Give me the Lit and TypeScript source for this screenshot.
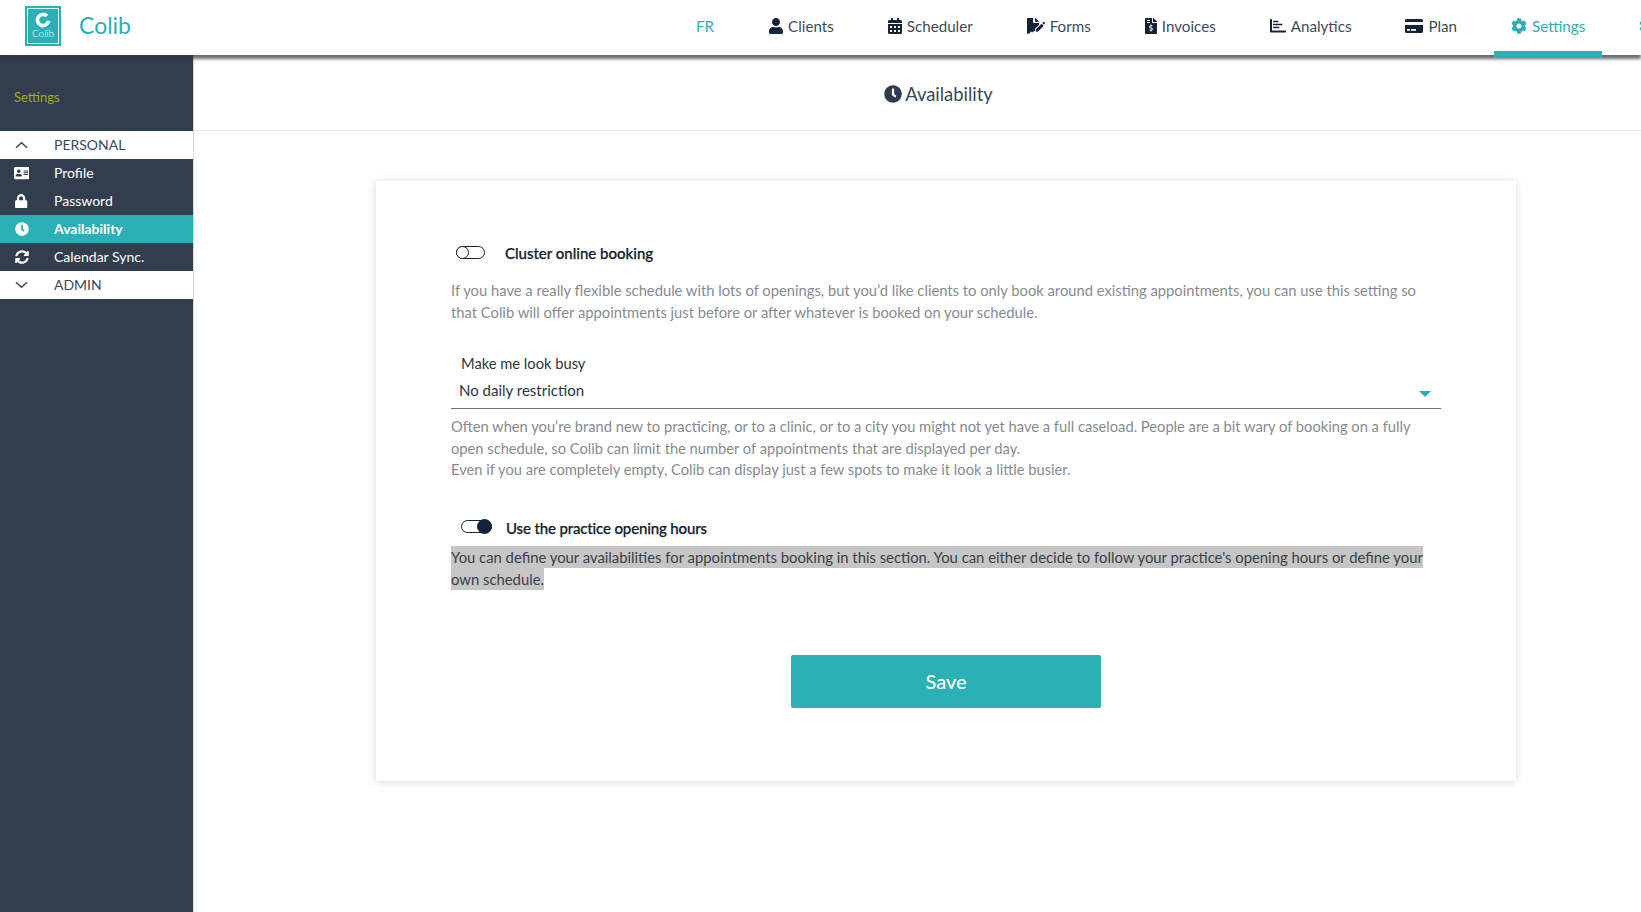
import { LitElement, html, css, svg } from 'lit';
import { customElement } from 'lit/decorators.js';

const icons: Record<string, { box: string; d: string }> = {
  user: { box: '0 0 448 512', d: 'M224 256c70.7 0 128-57.3 128-128S294.7 0 224 0 96 57.3 96 128s57.3 128 128 128zm89.6 32h-16.7c-22.2 10.2-46.9 16-72.9 16s-50.6-5.8-72.9-16h-16.7C60.2 288 0 348.2 0 422.4V464c0 26.5 21.5 48 48 48h352c26.5 0 48-21.5 48-48v-41.6c0-74.2-60.2-134.4-134.4-134.4z' },
  calendar: { box: '0 0 448 512', d: 'M0 464c0 26.5 21.5 48 48 48h352c26.5 0 48-21.5 48-48V192H0v272zm320-196c0-6.6 5.4-12 12-12h40c6.6 0 12 5.4 12 12v40c0 6.6-5.4 12-12 12h-40c-6.6 0-12-5.4-12-12v-40zm0 128c0-6.6 5.4-12 12-12h40c6.6 0 12 5.4 12 12v40c0 6.6-5.4 12-12 12h-40c-6.6 0-12-5.4-12-12v-40zM192 268c0-6.6 5.4-12 12-12h40c6.6 0 12 5.4 12 12v40c0 6.6-5.4 12-12 12h-40c-6.6 0-12-5.4-12-12v-40zm0 128c0-6.6 5.4-12 12-12h40c6.6 0 12 5.4 12 12v40c0 6.6-5.4 12-12 12h-40c-6.6 0-12-5.4-12-12v-40zM64 268c0-6.6 5.4-12 12-12h40c6.6 0 12 5.4 12 12v40c0 6.6-5.4 12-12 12H76c-6.6 0-12-5.4-12-12v-40zm0 128c0-6.6 5.4-12 12-12h40c6.6 0 12 5.4 12 12v40c0 6.6-5.4 12-12 12H76c-6.6 0-12-5.4-12-12v-40zM400 64h-48V16c0-8.8-7.2-16-16-16h-32c-8.8 0-16 7.2-16 16v48H160V16c0-8.8-7.2-16-16-16h-32c-8.8 0-16 7.2-16 16v48H48C21.5 64 0 85.5 0 112v48h448v-48c0-26.5-21.5-48-48-48z' },
  forms: { box: '0 0 576 512', d: 'M218.2 426.1c-7.6-.5-14.6 3.5-18 10.2-11.5 23-44.5 29.1-64.8 7l-16.4-18-21 53.4c-3.4 8.6-11.3 14.4-20.4 15.1h-1.6c-8.5 0-16.3-4.7-20.3-12.3L48 461.500V464c0 26.5 0 48 0 48h-24C10.700 512 0 501.300 0 488V24C0 10.700 10.700 0 24 0h168v136c0 13.200 10.800 24 24 24h168v60L256 347v64c0 5-15 15-37.800 15.100zM384 122H256V0h6c6.400 0 12.500 2.500 17 7l98 98c4.500 4.500 7 10.600 7 17zM288 360l178-178 68 68-178 178-76 10zM488 160l31-31c9-9 24-9 33 0l17 17c9 9 9 24 0 33l-31 31z' },
  invoice: { box: '0 0 384 512', d: 'M377 105L279.100 7c-4.500-4.500-10.600-7-17-7H256v128h128v-6.100c0-6.300-2.500-12.400-7-16.900zM224 136V0H24C10.700 0 0 10.700 0 24v464c0 13.300 10.700 24 24 24h336c13.300 0 24-10.700 24-24V160H248c-13.200 0-24-10.800-24-24zM64 72c0-4.400 3.600-8 8-8h80c4.400 0 8 3.600 8 8v16c0 4.400-3.600 8-8 8H72c-4.400 0-8-3.600-8-8V72zm0 64c0-4.400 3.600-8 8-8h80c4.400 0 8 3.600 8 8v16c0 4.400-3.600 8-8 8H72c-4.400 0-8-3.600-8-8v-16zm144 263.900V424c0 4.400-3.600 8-8 8h-16c-4.400 0-8-3.600-8-8v-24.300c-11.300-.6-22.300-4.500-31.400-11.400-3.900-2.900-4.100-8.800-.6-12.100l11.800-11.200c2.800-2.600 6.900-2.800 10.100-.7 3.900 2.400 8.300 3.700 12.800 3.700h28.100c6.500 0 11.800-5.900 11.800-13.200 0-6-3.600-11.200-8.800-12.800l-45-13.500c-18.600-5.600-31.600-23.400-31.600-43.400 0-24.500 19.100-44.400 42.700-45.100V216c0-4.400 3.600-8 8-8h16c4.400 0 8 3.600 8 8v24.300c11.300.6 22.300 4.500 31.400 11.400 3.900 2.900 4.100 8.800.6 12.100l-11.800 11.200c-2.800 2.600-6.900 2.800-10.100.7-3.900-2.400-8.300-3.700-12.800-3.700h-28.100c-6.500 0-11.800 5.900-11.800 13.200 0 6 3.600 11.200 8.800 12.800l45 13.500c18.600 5.600 31.600 23.400 31.600 43.400 0 24.500-19 44.400-42.700 45z' },
  chart: { box: '0 0 512 512', d: 'M496 400H64V48c0-8.800-7.200-16-16-16H16C7.200 32 0 39.200 0 48v384c0 17.700 14.300 32 32 32h464c8.800 0 16-7.200 16-16v-32c0-8.800-7.200-16-16-16zM112 136h144c6.600 0 12-5.400 12-12v-24c0-6.600-5.400-12-12-12H112c-6.600 0-12 5.400-12 12v24c0 6.600 5.400 12 12 12zm0 96h272c6.600 0 12-5.400 12-12v-24c0-6.600-5.400-12-12-12H112c-6.600 0-12 5.400-12 12v24c0 6.600 5.400 12 12 12zm0 96h176c6.600 0 12-5.400 12-12v-24c0-6.600-5.400-12-12-12H112c-6.600 0-12 5.400-12 12v24c0 6.600 5.400 12 12 12z' },
  card: { box: '0 0 576 512', d: 'M0 432c0 26.500 21.500 48 48 48h480c26.500 0 48-21.500 48-48V224H0v208zm192-68c0-6.600 5.400-12 12-12h136c6.600 0 12 5.400 12 12v40H192v-40zm-128 0c0-6.600 5.400-12 12-12h72c6.600 0 12 5.400 12 12v40H64v-40zM576 80v48H0V80c0-26.500 21.500-48 48-48h480c26.500 0 48 21.500 48 48z' },
  cog: { box: '0 0 512 512', d: 'M487.4 315.7l-42.6-24.6c4.3-23.2 4.3-47 0-70.2l42.6-24.6c4.9-2.8 7.1-8.6 5.5-14-11.1-35.6-30-67.8-54.7-94.6-3.8-4.1-10-5.1-14.8-2.3L380.8 110c-17.9-15.4-38.5-27.3-60.8-35.1V25.8c0-5.6-3.9-10.5-9.4-11.7-36.7-8.2-74.3-7.8-109.2 0-5.5 1.2-9.4 6.1-9.4 11.7V75c-22.2 7.9-42.8 19.8-60.8 35.1L88.7 85.5c-4.9-2.8-11-1.9-14.8 2.3-24.7 26.7-43.6 58.9-54.7 94.6-1.7 5.4.6 11.2 5.5 14L67.3 221c-4.3 23.2-4.3 47 0 70.2l-42.6 24.6c-4.9 2.8-7.1 8.6-5.5 14 11.1 35.6 30 67.8 54.7 94.6 3.8 4.1 10 5.1 14.8 2.3l42.6-24.6c17.9 15.4 38.5 27.3 60.8 35.1v49.2c0 5.6 3.9 10.5 9.4 11.7 36.7 8.2 74.3 7.8 109.2 0 5.5-1.2 9.4-6.1 9.4-11.7v-49.2c22.2-7.9 42.8-19.8 60.8-35.1l42.6 24.6c4.9 2.8 11 1.9 14.8-2.3 24.7-26.7 43.6-58.9 54.7-94.6 1.5-5.5-.7-11.3-5.6-14.1zM256 336c-44.1 0-80-35.9-80-80s35.9-80 80-80 80 35.9 80 80-35.9 80-80 80z' },
  clock: { box: '0 0 512 512', d: 'M256,8C119,8,8,119,8,256S119,504,256,504,504,393,504,256,393,8,256,8Zm92.49,313h0l-20,25a16,16,0,0,1-22.49,2.5h0l-67-49.72a40,40,0,0,1-15-31.23V112a16,16,0,0,1,16-16h32a16,16,0,0,1,16,16V256l58,42.5A16,16,0,0,1,348.49,321Z' },
  idcard: { box: '0 0 576 512', d: 'M528 32H48C21.500 32 0 53.500 0 80v352c0 26.500 21.500 48 48 48h480c26.500 0 48-21.500 48-48V80c0-26.500-21.500-48-48-48zM176 128c35.300 0 64 28.700 64 64s-28.700 64-64 64-64-28.700-64-64 28.700-64 64-64zm112 237c0 10.500-10 19-22.400 19H86.400C74 384 64 375.500 64 365v-19c0-31.500 30.100-57 67.200-57h5c12.300 5.100 25.700 8 39.800 8s27.600-2.900 39.800-8h5c37.100 0 67.200 25.500 67.200 57v19zm224-45c0 4.400-3.600 8-8 8H360c-4.400 0-8-3.600-8-8v-16c0-4.400 3.600-8 8-8h144c4.400 0 8 3.600 8 8v16zm0-64c0 4.400-3.600 8-8 8H360c-4.400 0-8-3.600-8-8v-16c0-4.400 3.600-8 8-8h144c4.400 0 8 3.600 8 8v16zm0-64c0 4.400-3.600 8-8 8H360c-4.400 0-8-3.600-8-8v-16c0-4.400 3.600-8 8-8h144c4.400 0 8 3.600 8 8v16z' },
  lock: { box: '0 0 448 512', d: 'M400 224h-24v-72C376 68.200 307.800 0 224 0S72 68.200 72 152v72H48c-26.500 0-48 21.500-48 48v192c0 26.500 21.500 48 48 48h352c26.500 0 48-21.500 48-48V272c0-26.500-21.500-48-48-48zm-104 0H152v-72c0-39.700 32.300-72 72-72s72 32.300 72 72v72z' },
  sync: { box: '0 0 512 512', d: 'M370.72 133.28C339.458 104.008 298.888 87.962 255.848 88c-77.458.068-144.328 53.178-162.791 126.85-1.344 5.363-6.122 9.15-11.651 9.15H24.103c-7.498 0-13.194-6.807-11.807-14.176C33.933 94.924 134.813 8 256 8c66.448 0 126.791 26.136 171.315 68.685L463.03 40.97C478.149 25.851 504 36.559 504 57.941V192c0 13.255-10.745 24-24 24H345.941c-21.382 0-32.09-25.851-16.971-40.971l41.75-41.749zM32 296h134.059c21.382 0 32.09 25.851 16.971 40.971l-41.75 41.75c31.262 29.273 71.835 45.319 114.876 45.28 77.418-.07 144.315-53.144 162.787-126.849 1.344-5.363 6.122-9.15 11.651-9.15h57.304c7.498 0 13.194 6.807 11.807 14.176C478.067 417.076 377.187 504 256 504c-66.448 0-126.791-26.136-171.315-68.685L48.97 471.03C33.851 486.149 8 475.441 8 454.059V320c0-13.255 10.745-24 24-24z' },
};

const icon = (name: string, cls = '') => html`<svg class="ic ${cls}" viewBox=${icons[name].box} fill="currentColor">${svg`<path d=${icons[name].d}></path>`}</svg>`;

const chevron = (up: boolean) => html`<svg class="chev" viewBox="0 0 14 8" fill="none" stroke="currentColor" stroke-width="1.6">${svg`<polyline points=${up ? '1,7 7,1.500 13,7' : '1,1 7,6.500 13,1'}></polyline>`}</svg>`;

const navItems = [
  { label: 'Clients', ic: 'user' },
  { label: 'Scheduler', ic: 'calendar' },
  { label: 'Forms', ic: 'forms' },
  { label: 'Invoices', ic: 'invoice' },
  { label: 'Analytics', ic: 'chart' },
  { label: 'Plan', ic: 'card' },
  { label: 'Settings', ic: 'cog', active: true },
  { label: '', ic: 'cog', accent: true },
];

@customElement('app-root')
export class AppRoot extends LitElement {
  static styles = css`
    :host {
      display: block;
      height: 912px;
      width: 1641px;
      overflow: hidden;
      font-family: 'Lato', 'Noto Sans', sans-serif;
      color: #2f3c4f;
      background: #fdfefe;
    }
    .ic { display: block; flex: none; }
    header {
      position: relative;
      z-index: 2;
      height: 55px;
      display: flex;
      background: #fff;
      box-shadow: 0 4px 3px rgba(50, 54, 60, 0.72);
    }
    .brand {
      width: 679px;
      flex: none;
      display: flex;
      align-items: center;
      padding: 0 0 3px 25px;
      box-sizing: border-box;
    }
    .logo {
      width: 36px;
      height: 40px;
      background: #2bb0b6;
      padding: 2px;
      box-sizing: border-box;
      flex: none;
    }
    .logo-in {
      height: 100%;
      box-sizing: border-box;
      border: 1px solid #dff4f5;
      display: flex;
      flex-direction: column;
      align-items: center;
      padding-top: 3px;
      color: #fff;
    }
    .logo-in svg { width: 16px; height: 16px; }
    .logo-in span { font-size: 10px; line-height: 11px; font-weight: 300; }
    .name {
      margin-left: 18px;
      padding-bottom: 2px;
      font-size: 23px;
      color: #2bb0b6;
    }
    nav { display: flex; gap: 20px; flex: none; }
    .tab {
      display: flex;
      align-items: center;
      gap: 5px;
      padding: 1px 17px 0;
      height: 57px;
      box-sizing: border-box;
      font-size: 15.17px;
      color: #3f4a58;
      white-space: nowrap;
      border-bottom: 6px solid transparent;
    }
    .tab .ic { height: 16px; width: auto; color: #12233a; }
    .tab.lang, .tab.on, .tab.accent, .tab.on .ic, .tab.accent .ic { color: #2bb0b6; }
    .tab.lang { margin-right: 1px; }
    .tab.on { border-bottom-color: #2bb0b6; }
    .body { display: flex; height: 857px; }
    aside {
      width: 193px;
      flex: none;
      background: #323e50;
      border-right: 1px solid #d4d6d9;
    }
    .side-title {
      height: 76px;
      display: flex;
      align-items: center;
      padding: 8px 0 0 14px;
      box-sizing: border-box;
      font-size: 13px;
      color: #a4ad0c;
    }
    .row {
      height: 28px;
      display: flex;
      align-items: center;
      font-size: 14px;
      color: #fff;
    }
    .row span { padding-bottom: 2px; }
    .row.head { background: #fff; color: #3c4859; }
    .row.on { background: #2bb0b6; font-weight: 700; }
    .slot { width: 54px; flex: none; display: flex; justify-content: center; padding-right: 11px; box-sizing: border-box; }
    .slot .ic { height: 14px; width: auto; }
    .chev { width: 13px; height: 8px; display: block; }
    main { flex: 1; min-width: 0; }
    .sub {
      height: 76px;
      box-sizing: border-box;
      border-bottom: 1px solid #e6e8ea;
      background: #fff;
      display: flex;
      align-items: center;
      justify-content: center;
      padding: 2px 0 0 42px;
      font-size: 18.4px;
      color: #39465a;
    }
    .sub-in { display: flex; align-items: center; gap: 3px; }
    .sub .ic { width: 18px; height: 18px; color: #2f3c4f; }
    .card {
      width: 1140px;
      height: 600px;
      margin: 50px 0 0 182px;
      padding: 61px 75px 0;
      box-sizing: border-box;
      background: #fff;
      box-shadow: 0 1px 8px rgba(0, 0, 0, 0.14);
    }
    .switch-row {
      display: flex;
      align-items: center;
      font-size: 15px;
      font-weight: 500;
      color: #14202f;
      height: 22px;
      -webkit-text-stroke: 0.25px #14202f;
    }
    .switch-row .lbl { margin-left: 20px; }
    .toggle {
      position: relative;
      width: 29px;
      height: 13px;
      box-sizing: border-box;
      border: 1px solid #12233a;
      border-radius: 8px;
      margin-left: 5px;
      margin-top: -2px;
      flex: none;
    }
    .toggle::after {
      content: '';
      position: absolute;
      left: -1px;
      top: -1px;
      width: 13px;
      height: 13px;
      box-sizing: border-box;
      border: 1px solid #12233a;
      border-radius: 50%;
      background: #fff;
    }
    .toggle.set { margin-left: 10px; width: 31px; }
    .toggle.set::after { left: auto; right: -1px; top: -2px; width: 15px; height: 15px; background: #12233a; }
    .set-row .lbl { margin-left: 14px; letter-spacing: -0.14px; }
    p {
      margin: 0;
      width: 985px;
      font-size: 14.7px;
      line-height: 21.5px;
      color: #878b91;
    }
    .first { margin-top: 16px; font-size: 14.76px; }
    .field { margin-top: 30px; }
    .field-lbl { font-size: 14.7px; line-height: 20px; color: #2a3647; padding-left: 10px; }
    .select {
      width: 990px;
      height: 31px;
      box-sizing: border-box;
      margin-top: 5px;
      padding: 0 10px 6px 8px;
      border-bottom: 1px solid #6f7276;
      display: flex;
      align-items: center;
      justify-content: space-between;
      font-size: 15px;
      color: #2a3647;
    }
    .caret {
      width: 0;
      height: 0;
      border-left: 6px solid transparent;
      border-right: 6px solid transparent;
      border-top: 6px solid #2bb0b6;
      margin-top: 8px;
    }
    .hint { margin-top: 7px; }
    .set-row { margin-top: 36px; }
    .sel { margin-top: 7px; color: #3a3f46; font-size: 14.84px; line-height: 22px; }
    .sel span { background: #c6c6c6; padding: 2px 0; }
    .save-wrap { display: flex; justify-content: center; margin-top: 65px; }
    button {
      width: 310px;
      height: 53px;
      border: 0;
      border-radius: 2px;
      background: #2bb0b6;
      color: #fff;
      font: 500 20px 'Lato', sans-serif;
      padding: 0;
    }
  `;

  render() {
    return html`
      <header>
        <div class="brand">
          <div class="logo">
            <div class="logo-in">
              <svg viewBox="0 0 20 20" fill="none" stroke="currentColor" stroke-width="4.5">${svg`<path d="M15 5A7 7 0 1 0 17 11"></path>`}</svg>
              <span>Colib</span>
            </div>
          </div>
          <span class="name">Colib</span>
        </div>
        <nav>
          <div class="tab lang">FR</div>
          ${navItems.map(n => html`<div class="tab ${n.active ? 'on' : ''} ${n.accent ? 'accent' : ''}">${icon(n.ic)}${n.label ? html`<span>${n.label}</span>` : ''}</div>`)}
        </nav>
      </header>
      <div class="body">
        <aside>
          <div class="side-title">Settings</div>
          <div class="row head"><div class="slot">${chevron(true)}</div><span>PERSONAL</span></div>
          <div class="row"><div class="slot">${icon('idcard')}</div><span>Profile</span></div>
          <div class="row"><div class="slot">${icon('lock')}</div><span>Password</span></div>
          <div class="row on"><div class="slot">${icon('clock')}</div><span>Availability</span></div>
          <div class="row"><div class="slot">${icon('sync')}</div><span>Calendar Sync.</span></div>
          <div class="row head"><div class="slot">${chevron(false)}</div><span>ADMIN</span></div>
        </aside>
        <main>
          <div class="sub"><div class="sub-in">${icon('clock')}<span>Availability</span></div></div>
          <section class="card">
            <div class="switch-row"><div class="toggle"></div><span class="lbl">Cluster online booking</span></div>
            <p class="first">If you have a really flexible schedule with lots of openings, but you’d like clients to only book around existing appointments, you can use this setting so that Colib will offer appointments just before or after whatever is booked on your schedule.</p>
            <div class="field">
              <div class="field-lbl">Make me look busy</div>
              <div class="select"><span>No daily restriction</span><i class="caret"></i></div>
            </div>
            <p class="hint">Often when you’re brand new to practicing, or to a clinic, or to a city you might not yet have a full caseload. People are a bit wary of booking on a fully open schedule, so Colib can limit the number of appointments that are displayed per day.<br />Even if you are completely empty, Colib can display just a few spots to make it look a little busier.</p>
            <div class="switch-row set-row"><div class="toggle set"></div><span class="lbl">Use the practice opening hours</span></div>
            <p class="sel"><span>You can define your availabilities for appointments booking in this section. You can either decide to follow your practice's opening hours or define your own schedule.</span></p>
            <div class="save-wrap"><button>Save</button></div>
          </section>
        </main>
      </div>
    `;
  }
}
